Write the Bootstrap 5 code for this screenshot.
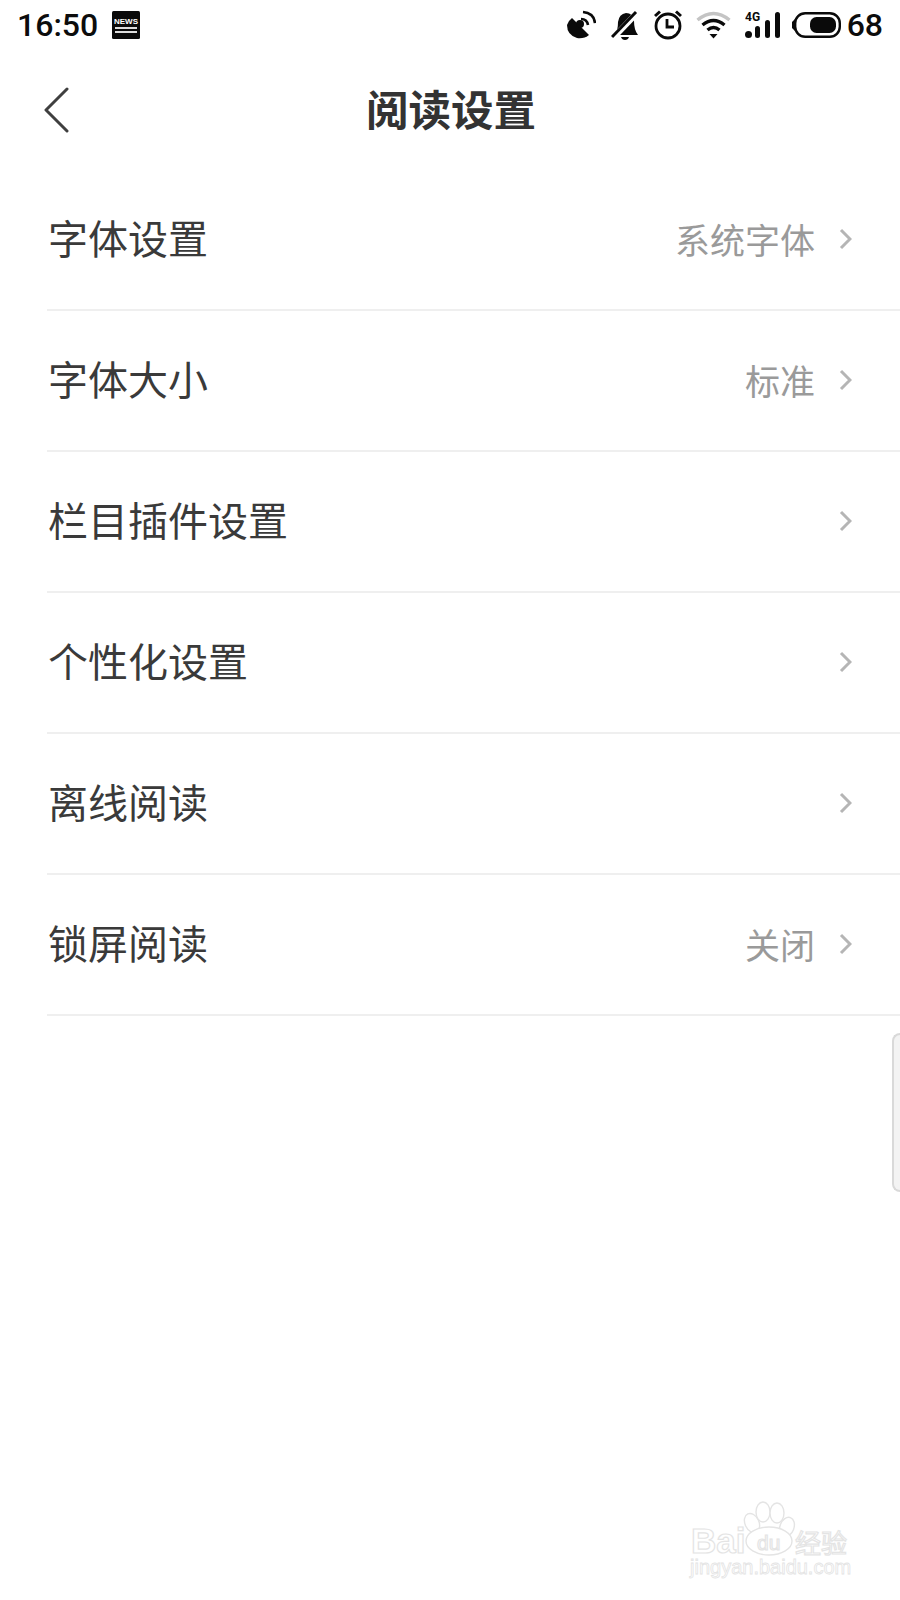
<!DOCTYPE html>
<html lang="zh-CN">
<head>
    <meta charset="UTF-8">
    <meta name="viewport" content="width=device-width, initial-scale=1.0">
    <title>阅读设置</title>
    <link href="https://cdn.jsdelivr.net/npm/bootstrap@5.3.2/dist/css/bootstrap.min.css" rel="stylesheet">
    <style>
        body { width: 900px; height: 1600px; overflow: hidden; position: relative; background: #fff;
               font-family: "Noto Sans CJK SC", "Noto Sans", sans-serif; }
        .status-bar { height: 50px; padding: 0 17px; color: #0c0c0c; font-family: Roboto, sans-serif; font-size: 32px; font-weight: 500; }
        .status-time { line-height: 50px; }
        .news-icon { margin-left: 14px; }
        .status-icons { gap: 14px; }
        .status-icons svg { display: block; }
        .gap-wide { margin-right: 1px; }
        .gap-tight { margin-right: -3px; }
        .gap-battery { margin-right: -8px; }
        .page-head { height: 120px; padding: 0 0 0 44px; }
        .head-side { width: 100px; }
        .page-title { font-size: 42.5px; font-weight: 700; color: #333; margin: 0 0 4px; line-height: 1; position: relative; left: -21px; }
        .setting-row { height: 141px; margin-left: 47px; padding: 0 48px 0 1px; border-bottom: 2px solid #efefef; }
        .setting-name { font-size: 40px; color: #3a3a3a; line-height: 1; margin-bottom: 5px; }
        .setting-value { font-size: 35px; color: #9a9a9a; line-height: 1; margin-right: 24px; margin-bottom: 2px; }
        .row-arrow { margin-bottom: 2px; }
        .side-handle { position: absolute; right: 0; top: 1033px; width: 8px; height: 159px; background: #f3f3f3;
                       border: 2px solid #d9d9d9; border-right: 0; border-radius: 10px 0 0 10px; }
        .baidu-mark { position: absolute; left: 680px; top: 1495px; }
        .baidu-mark text { fill: #fff; stroke: #e4e4e4; stroke-width: 1.2; }
    </style>
</head>
<body>
    <!-- status bar -->
    <div class="status-bar d-flex justify-content-between align-items-center">
        <div class="d-flex align-items-center">
            <span class="status-time">16:50</span>
            <svg class="news-icon" width="28" height="28" viewBox="0 0 28 28">
                <rect width="28" height="28" rx="1.5" fill="#0a0a0a"/>
                <text x="14" y="13" text-anchor="middle" font-family="Liberation Sans, sans-serif" font-size="8" font-weight="700" fill="#fff">NEWS</text>
                <rect x="3" y="16" width="22" height="2" fill="#ddd"/>
                <rect x="3" y="20" width="22" height="2" fill="#ddd"/>
            </svg>
        </div>
        <div class="status-icons d-flex align-items-center">
            <!-- satellite -->
            <svg class="gap-wide" width="29" height="30" viewBox="0 0 29 30">
                <path d="M5 8 L22 25 Q17 29 10 28 Q0 25 0 15 Q1 11 5 8Z" fill="#0a0a0a"/>
                <circle cx="13" cy="14" r="4" fill="#0a0a0a"/>
                <path d="M14 9 Q20 9 21 15" fill="none" stroke="#0a0a0a" stroke-width="2.6"/>
                <path d="M16 2 Q27 3 28 13" fill="none" stroke="#0a0a0a" stroke-width="2.6"/>
            </svg>
            <!-- muted bell -->
            <svg class="gap-wide" width="28" height="30" viewBox="0 0 28 30">
                <path d="M4 25 Q7 20 7 12 Q8 4 15 3 Q22 3 23 11 Q23 20 27 25Z" fill="#0a0a0a"/>
                <path d="M10 27 H18 Q17 30 14 30 Q11 30 10 27Z" fill="#0a0a0a"/>
                <path d="M2 28 L26 3" stroke="#fff" stroke-width="6"/>
                <path d="M1 27 L25 2" stroke="#0a0a0a" stroke-width="3"/>
            </svg>
            <!-- alarm -->
            <svg width="28" height="30" viewBox="0 0 28 30">
                <circle cx="14" cy="16" r="12" fill="none" stroke="#0a0a0a" stroke-width="2.8"/>
                <path d="M13 9 V17 H20" fill="none" stroke="#0a0a0a" stroke-width="2.8"/>
                <path d="M1 6 L6 1.5 M27 6 L22 1.5" stroke="#0a0a0a" stroke-width="3"/>
            </svg>
            <!-- wifi -->
            <svg width="35" height="28" viewBox="0 0 34 28">
                <path d="M1 9 Q17 -4 33 9" fill="none" stroke="#c4c4c4" stroke-width="3.4"/>
                <path d="M6 14 Q17 5 28 14" fill="none" stroke="#0a0a0a" stroke-width="3.4"/>
                <path d="M11 19 Q17 14 23 19" fill="none" stroke="#0a0a0a" stroke-width="3.4"/>
                <path d="M13 23 H21 L17 27.5Z" fill="#0a0a0a"/>
            </svg>
            <!-- 4G signal -->
            <svg class="gap-tight" width="36" height="28" viewBox="0 0 36 28">
                <text x="0" y="10" font-family="Roboto, sans-serif" font-size="12" font-weight="700" fill="#0a0a0a">4G</text>
                <circle cx="3.5" cy="23.5" r="3.5" fill="#0a0a0a"/>
                <rect x="10" y="15" width="5" height="12" rx="2.5" fill="#0a0a0a"/>
                <rect x="20" y="9" width="5" height="18" rx="2.5" fill="#0a0a0a"/>
                <rect x="30" y="1" width="5" height="26" rx="2.5" fill="#0a0a0a"/>
            </svg>
            <!-- battery -->
            <svg class="gap-battery" width="49" height="26" viewBox="0 0 49 26">
                <rect x="3.2" y="1.2" width="44.6" height="23.6" rx="10" fill="none" stroke="#0a0a0a" stroke-width="2.4"/>
                <rect x="18" y="5" width="26" height="16" rx="6.5" fill="#0a0a0a"/>
                <path d="M0 10 L3 7 V19 L0 16Z" fill="#0a0a0a"/>
            </svg>
            <span>68</span>
        </div>
    </div>

    <!-- header -->
    <div class="page-head d-flex justify-content-between align-items-center">
        <div class="head-side">
            <svg class="d-block" width="26" height="46" viewBox="0 0 26 46">
                <path d="M23 2 L2 23 L23 44" fill="none" stroke="#3f3f3f" stroke-width="3" stroke-linecap="round" stroke-linejoin="round"/>
            </svg>
        </div>
        <h1 class="page-title">阅读设置</h1>
        <div class="head-side"></div>
    </div>

    <!-- list -->
    <div class="settings-list">
        <div class="setting-row d-flex align-items-center">
            <span class="setting-name">字体设置</span>
            <span class="setting-value ms-auto">系统字体</span>
            <svg class="row-arrow" width="13" height="22" viewBox="0 0 13 22"><path d="M2 2 L11 11 L2 20" fill="none" stroke="#b5b5b5" stroke-width="3"/></svg>
        </div>
        <div class="setting-row d-flex align-items-center">
            <span class="setting-name">字体大小</span>
            <span class="setting-value ms-auto">标准</span>
            <svg class="row-arrow" width="13" height="22" viewBox="0 0 13 22"><path d="M2 2 L11 11 L2 20" fill="none" stroke="#b5b5b5" stroke-width="3"/></svg>
        </div>
        <div class="setting-row d-flex align-items-center">
            <span class="setting-name">栏目插件设置</span>
            <svg class="row-arrow ms-auto" width="13" height="22" viewBox="0 0 13 22"><path d="M2 2 L11 11 L2 20" fill="none" stroke="#b5b5b5" stroke-width="3"/></svg>
        </div>
        <div class="setting-row d-flex align-items-center">
            <span class="setting-name">个性化设置</span>
            <svg class="row-arrow ms-auto" width="13" height="22" viewBox="0 0 13 22"><path d="M2 2 L11 11 L2 20" fill="none" stroke="#b5b5b5" stroke-width="3"/></svg>
        </div>
        <div class="setting-row d-flex align-items-center">
            <span class="setting-name">离线阅读</span>
            <svg class="row-arrow ms-auto" width="13" height="22" viewBox="0 0 13 22"><path d="M2 2 L11 11 L2 20" fill="none" stroke="#b5b5b5" stroke-width="3"/></svg>
        </div>
        <div class="setting-row d-flex align-items-center">
            <span class="setting-name">锁屏阅读</span>
            <span class="setting-value ms-auto">关闭</span>
            <svg class="row-arrow" width="13" height="22" viewBox="0 0 13 22"><path d="M2 2 L11 11 L2 20" fill="none" stroke="#b5b5b5" stroke-width="3"/></svg>
        </div>
    </div>

    <div class="side-handle"></div>

    <!-- watermark -->
    <svg class="baidu-mark" width="180" height="95" viewBox="0 0 180 95">
        <g fill="#fff" stroke="#e4e4e4" stroke-width="1.4">
            <ellipse cx="72" cy="28" rx="7" ry="10" transform="rotate(-25 72 28)"/>
            <ellipse cx="83" cy="17" rx="7" ry="10"/>
            <ellipse cx="97" cy="18" rx="7" ry="10"/>
            <ellipse cx="107" cy="32" rx="7" ry="10" transform="rotate(20 107 32)"/>
            <ellipse cx="89" cy="46" rx="23" ry="14"/>
        </g>
        <text x="11" y="58" font-family="Liberation Sans, sans-serif" font-size="35" font-weight="700">Bai</text>
        <text x="77" y="55" font-family="Liberation Sans, sans-serif" font-size="21">du</text>
        <text x="115" y="58" font-family="Noto Sans CJK SC, sans-serif" font-size="26">经验</text>
        <text x="10" y="79" font-family="Liberation Sans, sans-serif" font-size="20" style="stroke-width:.8">jingyan.baidu.com</text>
    </svg>

    <script src="https://cdn.jsdelivr.net/npm/bootstrap@5.3.2/dist/js/bootstrap.bundle.min.js"></script>
</body>
</html>
